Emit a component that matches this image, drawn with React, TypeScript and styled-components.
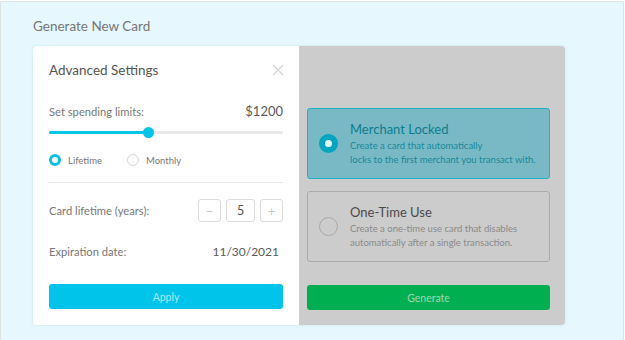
import styled, { createGlobalStyle } from "styled-components";

const GlobalStyle = createGlobalStyle`
  html, body {
    margin: 0;
    padding: 0;
    background: #ffffff;
  }
  body {
    font-family: Lato, "Open Sans", sans-serif;
  }
`;

const App = () => {
  return (
    <Frame>
      <GlobalStyle />
      <PageTitle>Generate New Card</PageTitle>
      <Card>
        <Settings>
          <Header>
            <HeaderTitle>Advanced Settings</HeaderTitle>
            <Close>
              <svg width="12" height="12" viewBox="0 0 12 12">
                <path d="M1 1L11 11M11 1L1 11" stroke="#d4d4d4" strokeWidth="1.2" />
              </svg>
            </Close>
          </Header>

          <Row>
            <Label>Set spending limits:</Label>
            <Amount>$1200</Amount>
          </Row>

          <Slider>
            <Track />
            <Fill style={{ width: `${(99 / 234) * 100}%` }} />
            <Thumb style={{ left: `${(99 / 234) * 100}%` }} />
          </Slider>

          <RadioRow>
            <SmallOption>
              <SmallRadio $checked />
              Lifetime
            </SmallOption>
            <SmallOption>
              <SmallRadio />
              Monthly
            </SmallOption>
          </RadioRow>

          <Divider />

          <Row $top={16}>
            <Label>Card lifetime (years):</Label>
            <Stepper>
              <StepButton>−</StepButton>
              <StepValue>5</StepValue>
              <StepButton>+</StepButton>
            </Stepper>
          </Row>

          <Row $top={21}>
            <Label>Expiration date:</Label>
            <DateValue>11/30/2021</DateValue>
          </Row>

          <ActionButton $bg="#00c4ea" $color="#aee9f6">Apply</ActionButton>
        </Settings>

        <Types>
          <TypeCard $active>
            <BigRadio $active />
            <TypeText>
              <TypeTitle $active>Merchant Locked</TypeTitle>
              <TypeDesc $active>
                Create a card that automatically
                <br />
                locks to the first merchant you transact with.
              </TypeDesc>
            </TypeText>
          </TypeCard>

          <TypeCard>
            <BigRadio />
            <TypeText>
              <TypeTitle>One-Time Use</TypeTitle>
              <TypeDesc>
                Create a one-time use card that disables
                <br />
                automatically after a single transaction.
              </TypeDesc>
            </TypeText>
          </TypeCard>

          <ActionButton $bg="#00b050" $color="#9fd6b3" $top={23}>Generate</ActionButton>
        </Types>
      </Card>
    </Frame>
  );
};
export default App;

const Frame = styled.div`
  box-sizing: border-box;
  width: 624px;
  height: 340px;
  margin-top: 1px;
  border-top: 1px solid #dde2e5;
  border-left: 1px solid #dde2e5;
  border-right: 1px solid #dde2e5;
  background: #e6f7fe;
  padding: 15px 0 0 32px;
`;

const PageTitle = styled.div`
  font-size: 13.5px;
  color: #767676;
  height: 18px;
  line-height: 18px;
  margin-bottom: 11px;
`;

const Card = styled.div`
  display: flex;
  width: 532px;
  height: 279px;
  border-radius: 4px;
  overflow: hidden;
  box-shadow: 0 0 3px rgba(150, 190, 205, 0.35);
`;

const Settings = styled.div`
  box-sizing: border-box;
  width: 266px;
  background: #ffffff;
  padding: 0 16px 15px 16px;
  display: flex;
  flex-direction: column;
`;

const Header = styled.div`
  height: 48px;
  display: flex;
  align-items: center;
  justify-content: space-between;
`;

const HeaderTitle = styled.div`
  font-size: 13.5px;
  color: #555555;
`;

const Close = styled.div`
  display: flex;
  margin-right: -1px;
`;

const Row = styled.div<{ $top?: number }>`
  display: flex;
  align-items: center;
  justify-content: space-between;
  min-height: 16px;
  margin-top: ${(p) => p.$top ?? 9}px;
`;

const Label = styled.div`
  font-size: 11.2px;
  color: #777777;
`;

const Amount = styled.div`
  font-size: 13px;
  color: #5a5a5a;
`;

const Slider = styled.div`
  position: relative;
  height: 10px;
  margin-top: 8px;
`;

const Track = styled.div`
  position: absolute;
  left: 0;
  right: 0;
  top: 4px;
  height: 3px;
  border-radius: 2px;
  background: #e9e9e9;
`;

const Fill = styled.div`
  position: absolute;
  left: 0;
  top: 4px;
  height: 3px;
  border-radius: 2px;
  background: #00c4ea;
`;

const Thumb = styled.div`
  position: absolute;
  top: 0;
  width: 11px;
  height: 11px;
  margin-left: -5px;
  border-radius: 50%;
  background: #00c4ea;
`;

const RadioRow = styled.div`
  display: flex;
  align-items: center;
  gap: 25px;
  margin-top: 16px;
  height: 14px;
`;

const SmallOption = styled.div`
  display: flex;
  align-items: center;
  gap: 7px;
  font-size: 9.5px;
  color: #777777;
`;

const SmallRadio = styled.div<{ $checked?: boolean }>`
  box-sizing: border-box;
  width: 12px;
  height: 12px;
  border-radius: 50%;
  background: #ffffff;
  border: ${(p) => (p.$checked ? "3.5px solid #00c4ea" : "1px solid #d6d6d6")};
`;

const Divider = styled.div`
  height: 1px;
  background: #e8e8e8;
  margin-top: 15px;
`;

const Stepper = styled.div`
  display: flex;
  gap: 5px;
`;

const StepButton = styled.div`
  box-sizing: border-box;
  width: 23px;
  height: 23px;
  border: 1px solid #dcdcdc;
  border-radius: 3px;
  display: flex;
  align-items: center;
  justify-content: center;
  font-size: 13px;
  color: #c8c8c8;
`;

const StepValue = styled(StepButton)`
  width: 29px;
  font-size: 12.5px;
  color: #555555;
`;

const DateValue = styled.div`
  font-size: 12px;
  color: #5a5a5a;
  margin-right: 4px;
`;

const ActionButton = styled.div<{ $bg: string; $color: string; $top?: number }>`
  margin-top: ${(p) => p.$top ?? 25}px;
  height: 25px;
  border-radius: 3px;
  background: ${(p) => p.$bg};
  color: ${(p) => p.$color};
  font-size: 10.5px;
  display: flex;
  align-items: center;
  justify-content: center;
`;

const Types = styled.div`
  flex: 1;
  background: #cccccc;
  padding: 62px 15px 15px 8px;
  display: flex;
  flex-direction: column;
`;

const TypeCard = styled.div<{ $active?: boolean }>`
  box-sizing: border-box;
  height: 71px;
  display: flex;
  align-items: center;
  gap: 12px;
  padding-left: 11px;
  border-radius: 3px;
  border: 1px solid ${(p) => (p.$active ? "#1eb0c5" : "#aaaaaa")};
  background: ${(p) => (p.$active ? "#79b9c5" : "#cccccc")};
  & + & {
    margin-top: 12px;
  }
`;

const BigRadio = styled.div<{ $active?: boolean }>`
  box-sizing: border-box;
  width: 19px;
  height: 19px;
  border-radius: 50%;
  flex-shrink: 0;
  background: ${(p) => (p.$active ? "#e9f4f6" : "transparent")};
  border: ${(p) => (p.$active ? "6px solid #02a6c0" : "1px solid #a9a9a9")};
`;

const TypeText = styled.div`
  display: flex;
  flex-direction: column;
`;

const TypeTitle = styled.div<{ $active?: boolean }>`
  font-size: 13px;
  color: ${(p) => (p.$active ? "#0b7d8e" : "#4a4a4a")};
  line-height: 16px;
  margin-bottom: 2px;
`;

const TypeDesc = styled.div<{ $active?: boolean }>`
  font-size: 9.5px;
  line-height: 14px;
  color: ${(p) => (p.$active ? "#17899a" : "#8a8a8a")};
`;
